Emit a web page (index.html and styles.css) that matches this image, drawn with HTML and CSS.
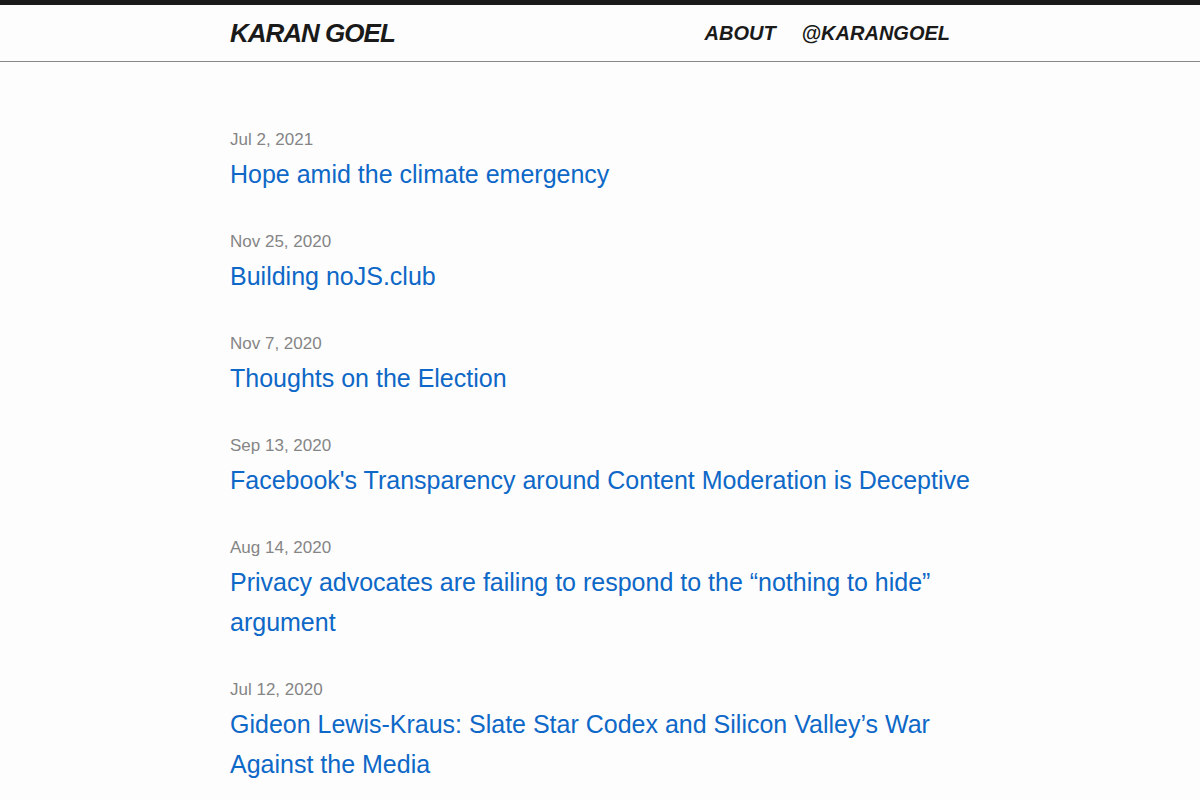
FILE: index.html
```html
<!DOCTYPE html>
<html lang="en">
<head>
<meta charset="utf-8">
<title>Karan Goel</title>
<link rel="stylesheet" href="styles.css">
</head>
<body>
<header class="site-header">
  <div class="wrap header-inner">
    <a class="logo" href="#">KARAN GOEL</a>
    <nav class="nav">
      <a href="#">ABOUT</a>
      <a href="#">@KARANGOEL</a>
    </nav>
  </div>
</header>
<main class="wrap posts">
  <article class="post">
    <div class="date">Jul 2, 2021</div>
    <a class="title" href="#">Hope amid the climate emergency</a>
  </article>
  <article class="post">
    <div class="date">Nov 25, 2020</div>
    <a class="title" href="#">Building noJS.club</a>
  </article>
  <article class="post">
    <div class="date">Nov 7, 2020</div>
    <a class="title" href="#">Thoughts on the Election</a>
  </article>
  <article class="post">
    <div class="date">Sep 13, 2020</div>
    <a class="title" href="#">Facebook's Transparency around Content Moderation is Deceptive</a>
  </article>
  <article class="post">
    <div class="date">Aug 14, 2020</div>
    <a class="title" href="#">Privacy advocates are failing to respond to the “nothing to hide” argument</a>
  </article>
  <article class="post">
    <div class="date">Jul 12, 2020</div>
    <a class="title" href="#">Gideon Lewis-Kraus: Slate Star Codex and Silicon Valley’s War Against the Media</a>
  </article>
</main>
</body>
</html>
```

FILE: styles.css
```css
* { box-sizing: border-box; }
html, body { margin: 0; padding: 0; }
body {
  font-family: "Liberation Sans", Arial, sans-serif;
  background: #fdfdfd;
  color: #111;
  border-top: 5px solid #1a1a1a;
}
a { text-decoration: none; }
.wrap {
  width: 740px;
  margin: 0 auto;
}
.site-header {
  border-bottom: 1px solid #888;
}
.header-inner {
  height: 56px;
  display: flex;
  align-items: center;
  justify-content: space-between;
}
.logo {
  font-size: 26px;
  font-weight: bold;
  font-style: italic;
  letter-spacing: -1px;
  color: #1a1a1a;
  line-height: 1;
}
.nav {
  display: flex;
  gap: 26px;
  padding-right: 20px;
}
.nav a {
  font-size: 20px;
  font-weight: bold;
  font-style: italic;
  color: #1a1a1a;
  line-height: 1;
}
.posts {
  padding-top: 66px;
}
.post {
  margin-bottom: 36px;
}
.date {
  font-size: 17px;
  line-height: 24px;
  color: #858585;
  margin-bottom: 2px;
}
.title {
  display: block;
  font-size: 25px;
  line-height: 40px;
  color: #0e68c7;
}
```
